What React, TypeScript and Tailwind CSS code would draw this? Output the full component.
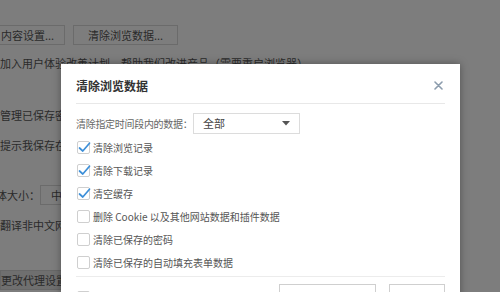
const options = [
  { label: '清除浏览记录', checked: true },
  { label: '清除下载记录', checked: true },
  { label: '清空缓存', checked: true },
  { label: '删除 Cookie 以及其他网站数据和插件数据', checked: false },
  { label: '清除已保存的密码', checked: false },
  { label: '清除已保存的自动填充表单数据', checked: false },
];

function Checkbox({ checked }: { checked: boolean }) {
  return (
    <div className="relative w-[13px] h-[13px] shrink-0 rounded-[2px] border border-[#cfcfcf] bg-white">
      {checked && (
        <svg className="absolute -left-[1px] -top-[2px]" width="15" height="15" viewBox="0 0 15 15">
          <path d="M2.5 8 L5.8 11 L12.5 3.2" fill="none" stroke="#3d8fd8" strokeWidth="1.7" strokeLinecap="round" strokeLinejoin="round" />
        </svg>
      )}
    </div>
  );
}

export default function App() {
  return (
    <div className="relative w-[500px] h-[292px] overflow-hidden bg-[#fbfbfb] font-['Noto_Sans_CJK_SC','Noto_Sans',sans-serif]">
      {/* settings page behind the dialog */}
      <div className="flex flex-col pt-[25px] text-[11px] leading-[16px] text-[#555]">
        <div className="flex items-center gap-[8px]">
          <div className="-ml-[40px] flex h-[20px] w-[105px] items-center border border-[#d6d6d6] pl-[40px]">内容设置...</div>
          <div className="flex h-[20px] w-[105px] items-center justify-center border border-[#d6d6d6]">清除浏览数据...</div>
        </div>
        <div className="mt-[10px] whitespace-nowrap">加入用户体验改善计划，帮助我们改进产品（需要重启浏览器）</div>
        <div className="mt-[34px] flex h-[20px] w-[120px] items-center whitespace-nowrap">管理已保存密码...</div>
        <div className="mt-[12px] whitespace-nowrap">提示我保存在网页中输入的密码</div>
        <div className="mt-[32px] flex h-[20px] items-center">
          <span className="-ml-[15px] w-[55px] whitespace-nowrap">字体大小：</span>
          <div className="flex h-[20px] w-[80px] items-center border border-[#d6d6d6] pl-[10px]">中</div>
        </div>
        <div className="mt-[12px] whitespace-nowrap">翻译非中文网页</div>
        <div className="mt-[37px] flex h-[20px] w-[75px] items-center whitespace-nowrap border border-[#cfcfcf] bg-[#dedede]">更改代理设置...</div>
      </div>

      <div className="absolute inset-0 bg-black/50" />

      {/* dialog */}
      <div className="absolute left-[61px] top-[64px] w-[399px] h-[260px] bg-white px-[15px] shadow-[0_0_8px_rgba(0,0,0,0.35)]">
        <div className="flex h-[40px] items-center justify-between border-b border-[#e8e8e8] pt-[4px]">
          <span className="text-[12px] font-bold text-[#333]">清除浏览数据</span>
          <svg width="9" height="9" viewBox="0 0 9 9" className="mr-[2px]">
            <path d="M1 1 L8 8 M8 1 L1 8" stroke="#8c9cad" strokeWidth="1.6" strokeLinecap="round" />
          </svg>
        </div>

        <div className="mt-[9px] flex h-[21px] items-center">
          <span className="w-[117px] whitespace-nowrap text-[10px] tracking-[-0.3px] text-[#666]">清除指定时间段内的数据：</span>
          <div className="flex h-[21px] w-[107px] items-center justify-between border border-[#dcdcdc] pl-[9px] pr-[9px]">
            <span className="text-[11px] text-[#444]">全部</span>
            <svg width="8" height="5" viewBox="0 0 8 5">
              <path d="M0 0 L8 0 L4 4.5 Z" fill="#555" />
            </svg>
          </div>
        </div>

        <div className="mt-[2px] flex flex-col">
          {options.map((o) => (
            <div key={o.label} className="flex h-[23px] items-center pl-[1px]">
              <Checkbox checked={o.checked} />
              <span className="ml-[3px] whitespace-nowrap text-[10px] text-[#555]">{o.label}</span>
            </div>
          ))}
        </div>

        <div className="mt-[2px] border-t border-[#ececec]" />

        <div className="mt-[7px] flex items-start justify-between">
          <div className="mt-[6px] flex items-center pl-[1px]">
            <Checkbox checked={false} />
            <span className="ml-[3px] whitespace-nowrap text-[10px] text-[#e4e4e4]">同时清除云端账号中的数据</span>
          </div>
          <div className="flex gap-[13px]">
            <div className="flex h-[24px] w-[97px] items-center justify-center border border-[#cfcfcf] pt-[12px] text-[11px] text-[#444]">清除浏览数据</div>
            <div className="flex h-[24px] w-[56px] items-center justify-center border border-[#cfcfcf] pt-[12px] text-[11px] text-[#444]">取消</div>
          </div>
        </div>
      </div>
    </div>
  );
}
